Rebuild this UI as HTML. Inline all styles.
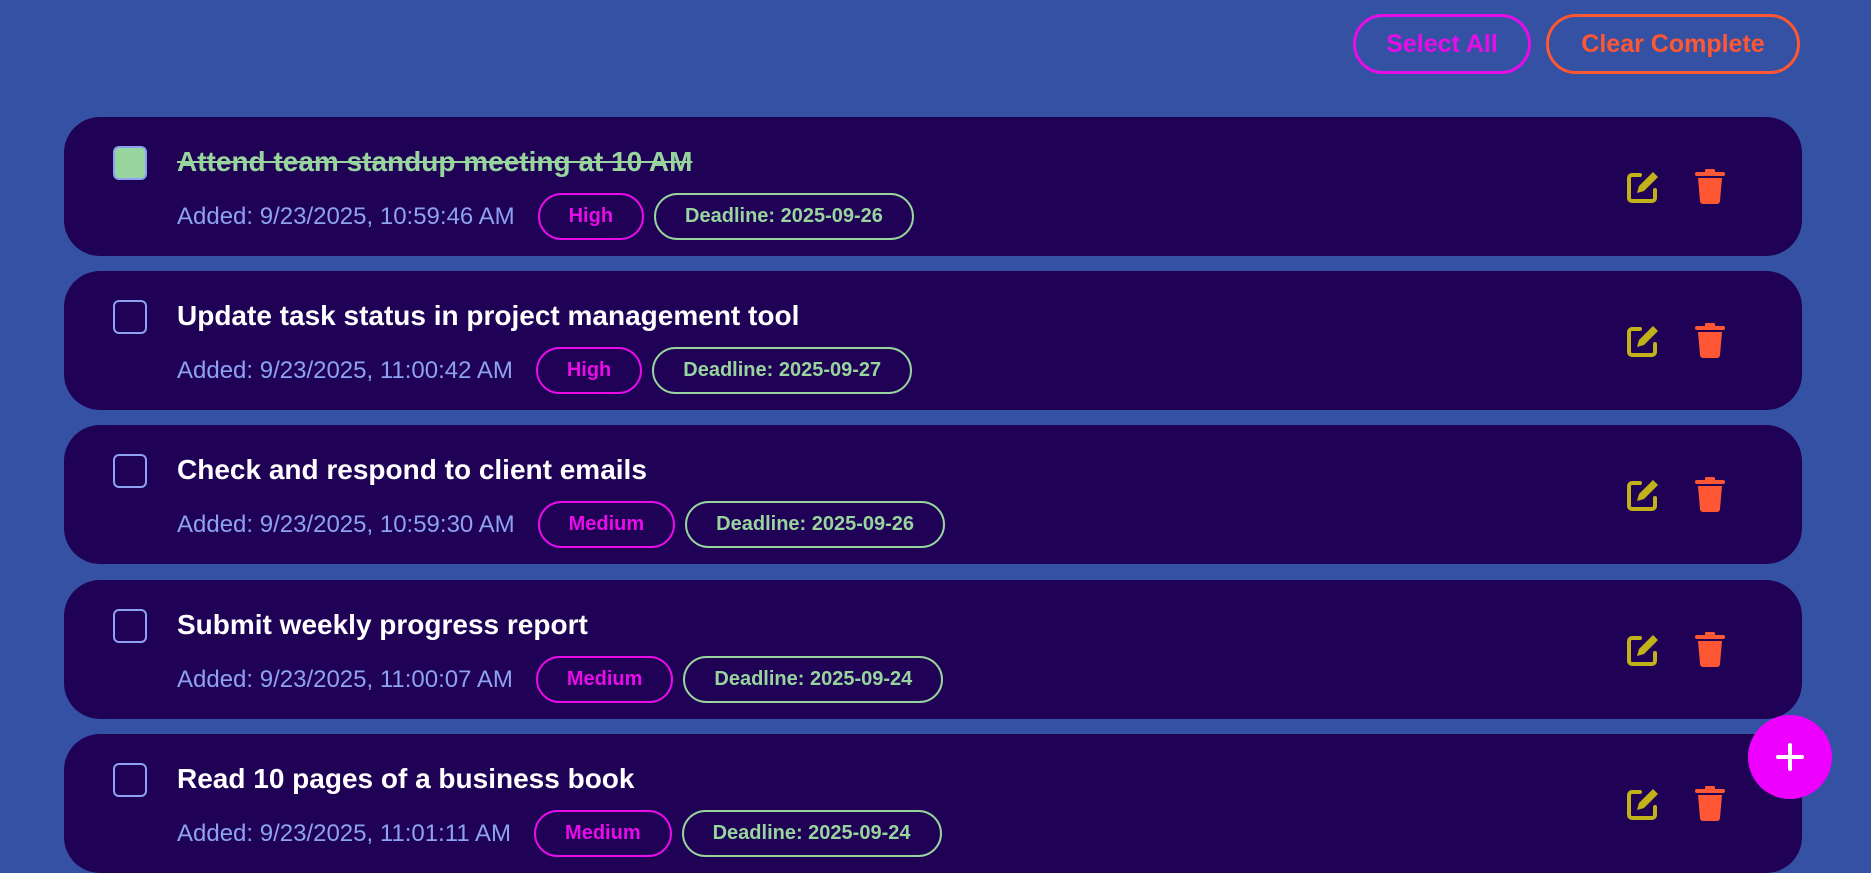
<!DOCTYPE html>
<html><head><meta charset="utf-8"><style>
*{box-sizing:border-box;margin:0;padding:0}
body{width:1871px;height:861px;background:#3551a3;font-family:"Liberation Sans",sans-serif;overflow:hidden;position:relative}
.btn{position:absolute;top:14px;height:60px;border:3px solid;border-radius:30px;background:transparent;font-size:25px;font-weight:bold;display:flex;align-items:center;justify-content:center}
.card{position:absolute;left:64px;width:1738px;height:139px;background:#1f0255;border-radius:36px}
.cb{position:absolute;left:49px;top:29px;width:34px;height:34px;border:2.5px solid #8da2f0;border-radius:6px}
.title{position:absolute;left:113px;top:29px;font-size:28px;font-weight:bold;color:#fff;white-space:nowrap}
.meta{position:absolute;left:113px;top:76px;height:47px;display:flex;align-items:center;white-space:nowrap}
.added{color:#8da2f0;font-size:24px;margin-right:23px}
.badge{height:47px;border:2.5px solid;border-radius:24px;font-size:20px;font-weight:bold;display:flex;align-items:center;padding:0 29px;margin-right:10px}
.hi{color:#e80ce8;border-color:#e80ce8}
.dl{color:#98d49e;border-color:#98d49e}
.ed{position:absolute;left:1561px;top:52px}
.tr{position:absolute;left:1630px;top:51px}
</style></head><body>
<div class="btn" style="left:1353px;width:178px;color:#e80ce8;border-color:#e80ce8">Select All</div>
<div class="btn" style="left:1546px;width:254px;color:#ff5733;border-color:#ff5733">Clear Complete</div>

<div class="card" style="top:117px"><div class="cb" style="background:#98d49e"></div><div class="title" style="color:#98d49e;text-decoration:line-through">Attend team standup meeting at 10 AM</div><div class="meta"><span class="added">Added: 9/23/2025, 10:59:46 AM</span><span class="badge hi">High</span><span class="badge dl">Deadline: 2025-09-26</span></div>
<svg class="ed" width="36" height="36" viewBox="0 0 36 36"><path d="M15 6H7a3 3 0 0 0-3 3v20a3 3 0 0 0 3 3h20a3 3 0 0 0 3-3v-8" fill="none" stroke="#c2b21a" stroke-width="4" stroke-linecap="round"/><path d="M28 3l5 5-14 14-7 2 2-7z" fill="#c2b21a"/></svg>
<svg class="tr" width="32" height="36" viewBox="0 0 32 36"><rect x="1" y="4" width="30" height="4" rx="2" fill="#ff5733"/><rect x="11" y="1" width="10" height="4" rx="1.5" fill="#ff5733"/><path d="M4 10h24l-2 23a3 3 0 0 1-3 3H9a3 3 0 0 1-3-3z" fill="#ff5733"/></svg></div>

<div class="card" style="top:271px"><div class="cb"></div><div class="title">Update task status in project management tool</div><div class="meta"><span class="added">Added: 9/23/2025, 11:00:42 AM</span><span class="badge hi">High</span><span class="badge dl">Deadline: 2025-09-27</span></div>
<svg class="ed" width="36" height="36" viewBox="0 0 36 36"><path d="M15 6H7a3 3 0 0 0-3 3v20a3 3 0 0 0 3 3h20a3 3 0 0 0 3-3v-8" fill="none" stroke="#c2b21a" stroke-width="4" stroke-linecap="round"/><path d="M28 3l5 5-14 14-7 2 2-7z" fill="#c2b21a"/></svg>
<svg class="tr" width="32" height="36" viewBox="0 0 32 36"><rect x="1" y="4" width="30" height="4" rx="2" fill="#ff5733"/><rect x="11" y="1" width="10" height="4" rx="1.5" fill="#ff5733"/><path d="M4 10h24l-2 23a3 3 0 0 1-3 3H9a3 3 0 0 1-3-3z" fill="#ff5733"/></svg></div>

<div class="card" style="top:425px"><div class="cb"></div><div class="title">Check and respond to client emails</div><div class="meta"><span class="added">Added: 9/23/2025, 10:59:30 AM</span><span class="badge hi">Medium</span><span class="badge dl">Deadline: 2025-09-26</span></div>
<svg class="ed" width="36" height="36" viewBox="0 0 36 36"><path d="M15 6H7a3 3 0 0 0-3 3v20a3 3 0 0 0 3 3h20a3 3 0 0 0 3-3v-8" fill="none" stroke="#c2b21a" stroke-width="4" stroke-linecap="round"/><path d="M28 3l5 5-14 14-7 2 2-7z" fill="#c2b21a"/></svg>
<svg class="tr" width="32" height="36" viewBox="0 0 32 36"><rect x="1" y="4" width="30" height="4" rx="2" fill="#ff5733"/><rect x="11" y="1" width="10" height="4" rx="1.5" fill="#ff5733"/><path d="M4 10h24l-2 23a3 3 0 0 1-3 3H9a3 3 0 0 1-3-3z" fill="#ff5733"/></svg></div>

<div class="card" style="top:580px"><div class="cb"></div><div class="title">Submit weekly progress report</div><div class="meta"><span class="added">Added: 9/23/2025, 11:00:07 AM</span><span class="badge hi">Medium</span><span class="badge dl">Deadline: 2025-09-24</span></div>
<svg class="ed" width="36" height="36" viewBox="0 0 36 36"><path d="M15 6H7a3 3 0 0 0-3 3v20a3 3 0 0 0 3 3h20a3 3 0 0 0 3-3v-8" fill="none" stroke="#c2b21a" stroke-width="4" stroke-linecap="round"/><path d="M28 3l5 5-14 14-7 2 2-7z" fill="#c2b21a"/></svg>
<svg class="tr" width="32" height="36" viewBox="0 0 32 36"><rect x="1" y="4" width="30" height="4" rx="2" fill="#ff5733"/><rect x="11" y="1" width="10" height="4" rx="1.5" fill="#ff5733"/><path d="M4 10h24l-2 23a3 3 0 0 1-3 3H9a3 3 0 0 1-3-3z" fill="#ff5733"/></svg></div>

<div class="card" style="top:734px"><div class="cb"></div><div class="title">Read 10 pages of a business book</div><div class="meta"><span class="added">Added: 9/23/2025, 11:01:11 AM</span><span class="badge hi">Medium</span><span class="badge dl">Deadline: 2025-09-24</span></div>
<svg class="ed" width="36" height="36" viewBox="0 0 36 36"><path d="M15 6H7a3 3 0 0 0-3 3v20a3 3 0 0 0 3 3h20a3 3 0 0 0 3-3v-8" fill="none" stroke="#c2b21a" stroke-width="4" stroke-linecap="round"/><path d="M28 3l5 5-14 14-7 2 2-7z" fill="#c2b21a"/></svg>
<svg class="tr" width="32" height="36" viewBox="0 0 32 36"><rect x="1" y="4" width="30" height="4" rx="2" fill="#ff5733"/><rect x="11" y="1" width="10" height="4" rx="1.5" fill="#ff5733"/><path d="M4 10h24l-2 23a3 3 0 0 1-3 3H9a3 3 0 0 1-3-3z" fill="#ff5733"/></svg></div>

<div style="position:absolute;left:1748px;top:715px;width:84px;height:84px;border-radius:50%;background:#ee00ff">
<svg width="84" height="84" viewBox="0 0 84 84"><path d="M42 30v24M30 42h24" stroke="#fff" stroke-width="4" stroke-linecap="round"/></svg></div>
</body></html>
